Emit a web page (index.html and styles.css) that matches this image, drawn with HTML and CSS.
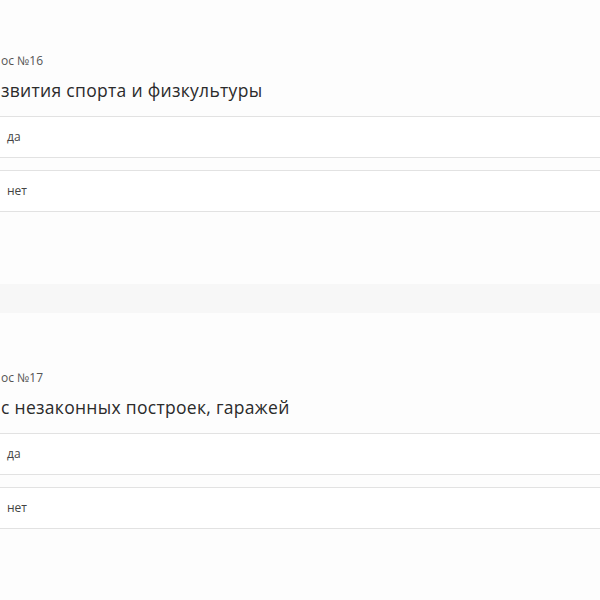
FILE: index.html
```html
<!DOCTYPE html>
<html lang="ru">
<head>
  <meta charset="UTF-8" />
  <title>Опрос</title>
  <link rel="stylesheet" href="styles.css">
</head>
<body>
  <div class="question">
    <div class="q-num">ос №16</div>
    <div class="q-title">звития спорта и физкультуры</div>
    <div class="options">
      <div class="option">да</div>
      <div class="option">нет</div>
    </div>
  </div>

  <div class="divider"></div>

  <div class="question second">
    <div class="q-num">ос №17</div>
    <div class="q-title">с незаконных построек, гаражей</div>
    <div class="options">
      <div class="option">да</div>
      <div class="option">нет</div>
    </div>
  </div>
</body>
</html>
```

FILE: styles.css
```css
body {
  margin: 0;
  background: #fdfdfd;
  font-family: 'Open Sans', sans-serif;
  color: #333;
  overflow: hidden;
}
.question {
  padding-top: 52px;
}
.question.second {
  padding-top: 56px;
}
.q-num {
  font-size: 12px;
  line-height: 18px;
  color: #555;
  padding-left: 1px;
}
.q-title {
  font-size: 17.5px;
  letter-spacing: 0.3px;
  line-height: 24px;
  color: #2b2b2b;
  margin-top: 8px;
  padding-left: 1px;
}
.options {
  margin-top: 14px;
  display: flex;
  flex-direction: column;
  gap: 12px;
}
.option {
  height: 40px;
  line-height: 40px;
  background: #fff;
  border-top: 1px solid #e2e2e2;
  border-bottom: 1px solid #e2e2e2;
  padding-left: 7px;
  font-size: 12px;
  color: #444;
}
.divider {
  margin-top: 72px;
  height: 29px;
  background: #f7f7f7;
}
```
